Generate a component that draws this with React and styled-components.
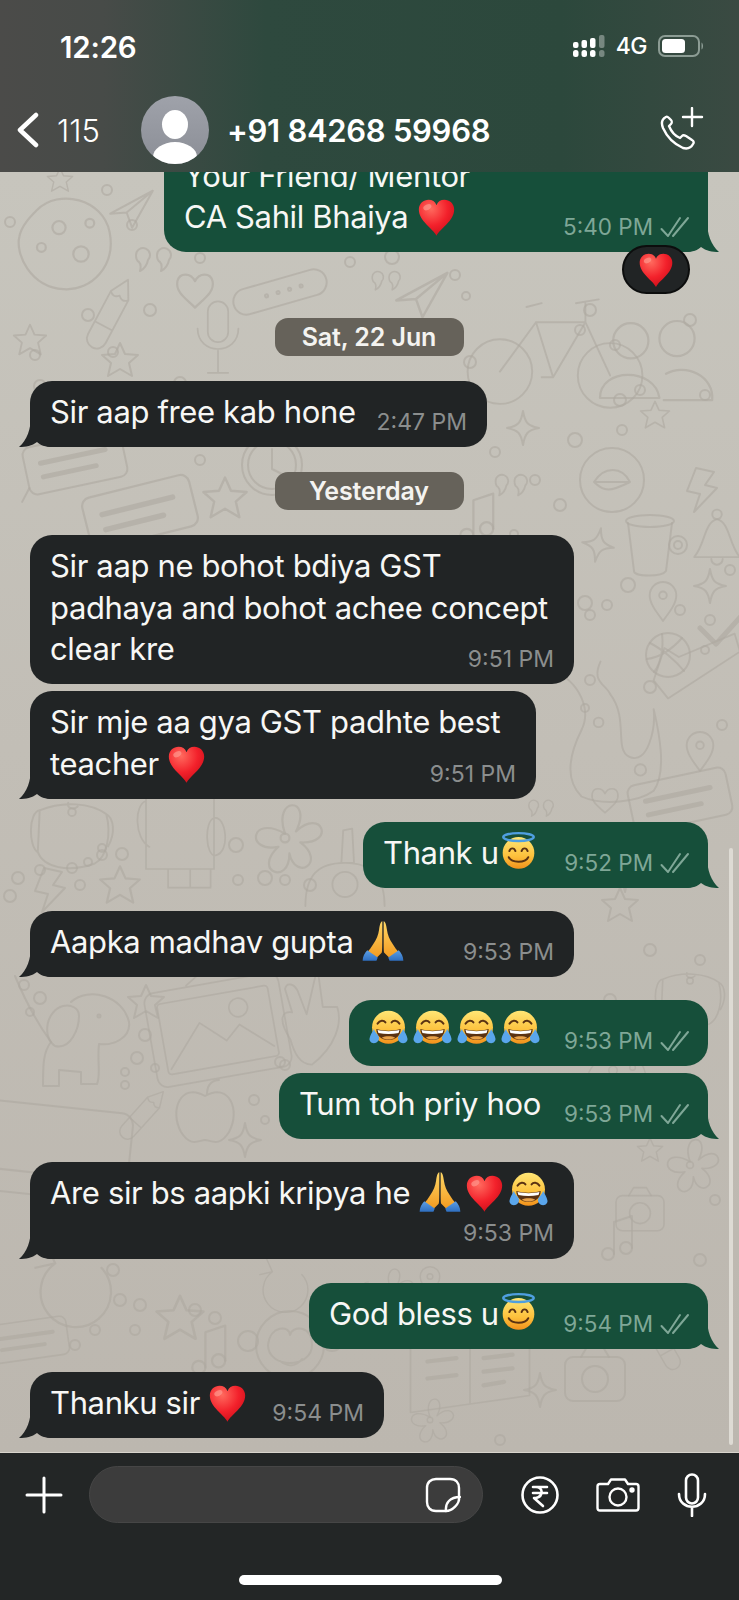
import React from 'react';
import styled, { createGlobalStyle } from 'styled-components';

const Global = createGlobalStyle`
  html, body { margin: 0; padding: 0; background: #232626; }
  body { font-family: Inter, "Liberation Sans", sans-serif; -webkit-font-smoothing: antialiased; }
  * { box-sizing: border-box; }
`;

const Screen = styled.div`
  width: 739px; height: 1600px; display: flex; flex-direction: column; overflow: hidden; color: #fff;
`;
const Header = styled.header`
  height: 172px; flex: none; padding-top: 22px; position: relative; z-index: 2;
  background: linear-gradient(90deg, #4b4b49 0%, #474b48 14%, #2e493e 36%, #2c483c 76%, #3a4a42 100%);
`;
const StatusRow = styled.div`
  height: 48px; display: flex; align-items: center; padding: 0 35px 0 60px;
`;
const Clock = styled.span`
  font-size: 29.5px; font-weight: 600; letter-spacing: -0.2px; margin-right: auto; position: relative; top: 1px;
`;
const Net = styled.span`
  font-size: 23px; font-weight: 500; margin: 0 11px; letter-spacing: -0.5px;
`;
const NavRow = styled.div`
  height: 68px; margin-top: 26px; display: flex; align-items: center; padding: 0 35px 0 17px;
`;
const BackCount = styled.span`
  font-size: 31px; font-weight: 300; margin-left: 18px; width: 84px; letter-spacing: 0;
`;
const Avatar = styled.div`
  width: 68px; height: 68px; border-radius: 50%; flex: none; position: relative; overflow: hidden;
  background: linear-gradient(180deg, #9fa2aa, #8b8e96);
  &::before { content: ''; position: absolute; left: 21px; top: 14px; width: 26px; height: 29px; border-radius: 50%; background: #fff; }
  &::after { content: ''; position: absolute; left: 12px; top: 46px; width: 44px; height: 30px; border-radius: 50%; background: #fff; }
`;
const Name = styled.span`
  font-size: 31px; font-weight: 600; margin-left: 18px; margin-right: auto; letter-spacing: -0.3px;
`;

const Chat = styled.main`
  flex: 1; min-height: 0; position: relative; overflow: hidden;
  background: linear-gradient(180deg, #c7c5bd 0%, #c2beb6 45%, #bcb7af 100%);
`;
const Wallpaper = styled.svg`
  position: absolute; left: 0; top: 0; width: 739px; height: 1280px;
  fill: none; stroke: #aea9a0; stroke-opacity: .6; stroke-width: 2; stroke-linecap: round; stroke-linejoin: round;
`;
const List = styled.div`
  position: relative; display: flex; flex-direction: column; padding: 0 31px 0 30px; margin-top: -27.5px;
`;
const DatePill = styled.div`
  align-self: center; width: 189px; height: 38px; margin-top: ${p => p.$top}px; border-radius: 13px;
  background: #66625a; color: #f4f3f0; font-size: 25px; font-weight: 600; text-align: center; line-height: 39px; letter-spacing: -0.1px;
`;
const Body = styled.div`
  white-space: pre-line; grid-area: 1 / 1;
`;
const Meta = styled.div`
  grid-area: 1 / 1;
  display: flex; align-items: center; gap: 7px; justify-self: end; align-self: end;
  font-size: ${p => (p.$mine ? 22.5 : 23)}px; line-height: 28px; letter-spacing: 0; font-weight: 400;
  color: ${p => (p.$mine ? '#7fa797' : '#8b8e8e')};
  margin: 0 ${p => (p.$mine ? -2 : 0)}px ${p => p.$drop ?? -3.5}px 0;
`;
const Bubble = styled.div`
  position: relative; isolation: isolate; display: grid; width: ${p => p.$w}px; margin-top: ${p => p.$top || 0}px;
  align-self: ${p => (p.$mine ? 'flex-end' : 'flex-start')};
  background: ${p => (p.$mine ? '#164f3a' : '#212425')};
  border-radius: 22px; padding: 10px 20px ${p => p.$bottom || 14.5}px;
  font-size: 31px; line-height: 41.5px; color: #f7f7f5; letter-spacing: -0.36px;
`;
const TailSvg = styled.svg`
  position: absolute; z-index: -1; bottom: 0; width: 34px; height: 32px; overflow: visible;
  ${p => (p.$mine ? 'right: -11px; transform: scaleX(-1);' : 'left: -11px;')}
  fill: ${p => (p.$mine ? '#164f3a' : '#212425')};
`;
const Reaction = styled.div`
  position: absolute; right: 18px; bottom: -42px; width: 68px; height: 49px; border-radius: 25px;
  background: #212425; border: 2px solid #0c0d0d; display: flex; align-items: center; justify-content: center;
`;
const Scrollbar = styled.div`
  position: absolute; left: 729px; top: 676px; width: 4px; height: 597px; border-radius: 2px; background: #dedbd4;
`;

const Footer = styled.footer`
  height: 148px; flex: none; background: #232626; padding-top: 13px; display: flex; flex-direction: column;
  border-top: 1px solid #d8d4cc;
`;
const InputRow = styled.div`
  display: flex; align-items: center; height: 57px; padding-left: 25px;
`;
const InputBox = styled.div`
  width: 394px; height: 57px; margin: 0 38px 0 26px; border-radius: 29px; background: #3c3c3c;
  display: flex; align-items: center; justify-content: flex-end; padding-right: 21px;
  border: 1px solid #464646;
`;
const Actions = styled.div`
  display: flex; align-items: center; gap: 37px;
`;
const HomeBar = styled.div`
  width: 263px; height: 10px; border-radius: 5px; background: #fff; margin: 52px auto 0 239px;
`;
const Ico = styled.svg`
  flex: none; display: block; fill: none; stroke: #fff; stroke-width: ${p => p.$sw || 2.6}; stroke-linecap: round; stroke-linejoin: round;
  ${p => (p.$lift ? `margin-top: -${p.$lift}px;` : '')}
`;
/* the negative block margins keep an emoji from making its line taller */
const EmojiSvg = styled.svg`
  display: inline-block; width: ${p => p.$s || 39}px; height: ${p => p.$s || 39}px;
  margin: -12px ${p => p.$mr || 0}px -12px 0;
  vertical-align: ${p => (p.$v ?? -8) + 12}px;
`;

const Defs = () => (
  <svg width="0" height="0" style={{ position: 'absolute' }}>
    <defs>
      <radialGradient id="hrt" cx="35%" cy="25%" r="85%">
        <stop offset="0" stopColor="#ff6a5e" /><stop offset=".55" stopColor="#f3212b" /><stop offset="1" stopColor="#c70d18" />
      </radialGradient>
      <linearGradient id="face" x1="0" y1="0" x2="0" y2="1">
        <stop offset="0" stopColor="#ffe675" /><stop offset=".6" stopColor="#fdc13c" /><stop offset="1" stopColor="#f2911c" />
      </linearGradient>
      <linearGradient id="hand" x1="0" y1="0" x2="0" y2="1">
        <stop offset="0" stopColor="#ffd765" /><stop offset="1" stopColor="#f29a20" />
      </linearGradient>
      <linearGradient id="cuff" x1="0" y1="0" x2="0" y2="1">
        <stop offset="0" stopColor="#5c9fe6" /><stop offset="1" stopColor="#2f6fc0" />
      </linearGradient>
    </defs>
  </svg>
);

const Heart = ({ s, mr }) => (
  <EmojiSvg $s={s} $mr={mr} viewBox="0 0 64 64" $v={-9}>
    <path fill="url(#hrt)" d="M32 62C26 50 3 38 3 19 3 9 11 3 19 3c6 0 11 3 13 9 2-6 7-9 13-9 8 0 16 6 16 16 0 19-23 31-29 43Z" />
    <ellipse cx="17" cy="15" rx="7" ry="4.5" fill="#ff9d92" opacity=".65" transform="rotate(-25 17 15)" />
  </EmojiSvg>
);
const Halo = () => (
  <EmojiSvg viewBox="0 0 64 64" $v={-6}>
    <circle cx="32" cy="36" r="26" fill="url(#face)" />
    <ellipse cx="32" cy="10" rx="25" ry="6.5" fill="none" stroke="#4f9fe0" strokeWidth="4" />
    <g fill="none" stroke="#5a3212" strokeWidth="3.2" strokeLinecap="round">
      <path d="M17 33c2-6 8-6 10 0M37 33c2-6 8-6 10 0" />
      <path d="M16 43c5 10 27 10 32 0" />
    </g>
  </EmojiSvg>
);
const Joy = ({ mr }) => (
  <EmojiSvg viewBox="0 0 64 64" $mr={mr} $v={-6}>
    <circle cx="32" cy="30" r="27" fill="url(#face)" />
    <g fill="none" stroke="#5a3212" strokeWidth="3.2" strokeLinecap="round">
      <path d="M14 24c4-6 10-6 13-2M37 22c3-4 9-4 13 2" />
    </g>
    <path d="M12 33c13 3.500 27 3.500 40 0 0 11-8 18-20 18S12 44 12 33Z" fill="#5a3212" />
    <path d="M14 34.500c11 2.500 25 2.500 36 0l-1.500 5c-11 2-22 2-33 0Z" fill="#fff" />
    <path d="M21 47c6-3 16-3 22 0-6 4-16 4-22 0Z" fill="#e9a24a" />
    <path d="M8 33c1 4 6 9 8 12 2 6-3 11-8 11s-8-4-7-8c1-5 4-9 7-15ZM56 33c-1 4-6 9-8 12-2 6 3 11 8 11s8-4 7-8c-1-5-4-9-7-15Z" fill="#5aa6ec" />
  </EmojiSvg>
);
const Pray = ({ mr }) => (
  <EmojiSvg viewBox="0 0 64 64" $s={42} $mr={mr} $v={-9}>
    <path fill="url(#hand)" d="M31 2c-3 1-4 6-5 13-1 8-4 15-9 22-3 5-6 9-9 12l14 9 8-8c1-2 1-6 1-48Z" />
    <path fill="url(#hand)" d="M33 2c3 1 4 6 5 13 1 8 4 15 9 22 3 5 6 9 9 12l-14 9-8-8c-1-2-1-6-1-48Z" />
    <path fill="url(#cuff)" d="M8 46 24 57l-2 5H1c0-6 3-12 7-16ZM56 46 40 57l2 5h21c0-6-3-12-7-16Z" />
  </EmojiSvg>
);
const Ticks = () => (
  <svg width="30" height="22" viewBox="0 0 30 22" fill="none" stroke="currentColor" strokeWidth="2" strokeLinecap="round" strokeLinejoin="round">
    <path d="M1.500 13 8 20 20 2M13 20 28 2" />
  </svg>
);
const Tail = ({ mine }) => (
  <TailSvg $mine={mine} viewBox="0 0 34 32">
    <path d="M12 0C12 14 8 25 0 32c7 0 13-1 18-5 3 3 8 5 16 5V0Z" />
  </TailSvg>
);

const Msg = ({ mine, w, top, tail, time, bottom, drop, children }) => (
  <Bubble $mine={mine} $w={w} $top={top} $bottom={bottom}>
    {tail && <Tail mine={mine} />}
    <Body>{children}</Body>
    <Meta $mine={mine} $drop={drop}>{time}{mine && <Ticks />}</Meta>
  </Bubble>
);

/* wallpaper doodles */
const D = ({ x, y, r = 0, s = 1, children }) => <g transform={`translate(${x} ${y}) rotate(${r}) scale(${s})`}>{children}</g>;
const Star = p => <D {...p}><path d="M0-17 5-6l13 1-9 8 3 13L0 9l-12 7 3-13-9-8 13-1Z" /></D>;
const Spark = p => <D {...p}><path d="M0-17C2-5 5-2 16 0 5 2 2 5 0 17-2 5-5 2-16 0-5-2-2-5 0-17Z" /></D>;
const Bolt = p => <D {...p}><path d="M-4-22 14-18 5-5 17-2-6 22 0 4-13 1Z" /></D>;
const Pin = p => <D {...p}><path d="M0 22C-9 10-14 3-14-5a14 14 0 0 1 28 0C14 3 9 10 0 22Z" /><circle cy="-5" r="4" /></D>;
const Quote = p => <D {...p}><path d="M-16-10a7 7 0 1 1 12 5c-1 5-4 9-8 11 1-4 1-7-1-9-2-1-3-4-3-7ZM5-10a7 7 0 1 1 12 5c-1 5-4 9-8 11 1-4 1-7-1-9-2-1-3-4-3-7Z" /></D>;
const Pencil = p => <D {...p}><path d="M-11 36V-18L0-38l11 20v54a11 11 0 0 1-22 0ZM-11-18c4 4 7 4 11 0 4 4 7 4 11 0M-11 20H11" /></D>;
const Mic = p => <D {...p}><rect x="-12" y="-36" width="24" height="48" rx="12" /><path d="M-24-4c0 32 48 32 48 0M0 22V48M-12 48H12" /></D>;
const Card = p => <D {...p}><rect x="-50" y="-24" width="100" height="48" rx="8" /><path d="M-34-6H32M-34 8H20" strokeWidth="5" /><path d="M-50 16-60 28" /></D>;
const Band = p => <D {...p}><rect x="-48" y="-13" width="96" height="26" rx="13" /><circle cx="-14" r="1.500" /><circle cx="-2" r="1.500" /><circle cx="10" r="1.500" /><circle cx="22" r="1.500" /></D>;
const Plane = p => <D {...p}><path d="M-18 12 20-18 6 22-2 8ZM-2 8 20-18" /></D>;
const Bike = p => <D {...p}><circle cx="-58" cy="28" r="34" /><circle cx="58" cy="32" r="34" /><path d="M-58 28-20-24H32L58 32M-20-24-2 34 32-24M-30-40-14-44M22-44 46-48M32-44V-24M-14 34H-2" /></D>;
const People = p => <D {...p}><circle cx="-22" cy="-22" r="16" /><circle cx="20" cy="-24" r="16" /><path d="M-50 30c0-28 50-28 54 0ZM10 8c18-10 44 2 42 24H8" /></D>;
const Duck = p => <D {...p}><circle r="32" /><path d="M-18 2C-8-14 10-14 18 2-2 12-8 12-18 2ZM-18 2 18 2" /></D>;
const Cup = p => <D {...p}><path d="M-24-22-18 26c0 6 28 6 32 0l6-48" /><ellipse cx="-2" cy="-24" rx="24" ry="6" /><circle cx="26" cy="0" r="9" /><circle cx="26" cy="0" r="4" /></D>;
const Bell = p => <D {...p}><path d="M-24 18C-12 4-14-18 0-22 14-18 12 4 24 18Z" /><circle cy="-27" r="5" /><path d="M-6 20a6 6 0 0 0 12 0" /></D>;
const Ball = p => <D {...p}><circle r="22" /><path d="M-18-12C-6-6 8 6 16 16M-6-21C-4-6-8 10-14 17M14-17C6-8-6 2-21 4" /></D>;
const Octo = p => <D {...p}><path d="M-62-64C-30-50-20-20-30 0c-10 20-20 50 0 70 22 10 60 6 76-6 14-20 6-60 0-86 2 20-6 60-26 50-16-8 0-40-20-66C-4-48-20-50-10-72" /><circle cx="-12" cy="-8" r="5" /><circle cx="32" cy="42" r="6" /></D>;
const Shoe = p => <D {...p}><path d="M-46 6-34-30l16 10L44-46 50-26-30 26Z" /></D>;
const Check = p => <D {...p}><path d="M-20-2-4 14 32-26" strokeWidth="5" /></D>;
const Mug = p => <D {...p}><path d="M-34-26C-10-36 20-34 36-22 42 0 36 24 24 30-4 40-30 34-36 18ZM-34-26c-12 2-12 38-2 44M-4-34c-2 6 6 8 10 4M36-22c8 4 10 20 2 34" /><circle cx="0" cy="-24" r="4" /></D>;
const Figure = p => <D {...p}><path d="M-40-50a40 40 0 0 1 80 0V40H-40ZM-40-40c-14 4-14 44 4 54M40-20c14-4 20 40 2 44-12 2-14-40-2-44ZM-14 40V62H12V40M12 44V62H36V40" /></D>;
const Flower = p => <D {...p}><path d="M0-4C-12-38 26-38 10-6 34-28 46 6 14 4 38 22 10 40 4 14 4 44-30 30-6 8-36 14-32-22 0-4Z" /><circle r="4" /></D>;
const Cake = p => <D {...p}><path d="M-2-44 8-46 10-8H-4ZM-44 40C-44 6-30-8 0-8 32-8 44 10 44 40" /><circle cy="16" r="14" /></D>;
const Dog = p => <D {...p}><path d="M-14-28C4-44 38-34 44-8 46 8 28 16 14 14 12 30 16 46 12 54H-4L-4 42-26 40-26 56H-42C-42 36-42 22-34 12M-34 12C-50-10-60-30-70-54" /><path d="M-22-24C-38-20-44 6-30 16-14 20-6 -2-6-14-6-22-14-26-22-24Z" /><circle cx="14" cy="-14" r="1.500" /></D>;
const Frame = p => <D {...p}><rect x="-80" y="-56" width="160" height="112" rx="12" /><rect x="-66" y="-42" width="132" height="84" rx="4" /><path d="M-62 36-20-12 8 14 26-2 62 30" /><circle cx="28" cy="-22" r="11" /><path d="M-28-58-2-74 70-60" /></D>;
const Hand = p => <D {...p}><path d="M-24 16C-38-6-34-16-22-14L-30-40C-28-48-20-46-16-38L-6-12 6-64 12-20 28-20C34-2 26 24 0 44-14 44-20 30-24 16Z" /></D>;
const Apple = p => <D {...p}><path d="M0-14C-24-28-36 0-24 22-14 38-6 30 0 30 6 30 14 38 24 22 36 0 24-28 0-14ZM2-16C2-26 8-30 14-30" /></D>;
const Tablet = p => <D {...p}><rect x="-80" y="-44" width="160" height="90" rx="12" /><path d="M-60 24H60" /></D>;
const Ring = p => <D {...p}><path d="M-18-26A32 32 0 1 0 24-22M-26-44-18-26-36-22" /></D>;
const Monkey = p => <D {...p}><circle r="34" /><path d="M-22 0C-20-20 0-20 0-10 2-20 22-20 22 0 22 24-22 24-22 0ZM-10 16C-2 22 6 22 12 14" /><circle cx="-42" cy="-4" r="10" /><circle cx="42" cy="-4" r="10" /></D>;
const Note = p => <D {...p}><path d="M-6 14V-18L12-24V8" /><circle cx="-12" cy="14" r="6" /><circle cx="6" cy="8" r="6" /></D>;
const Book = p => <D {...p}><path d="M-70-40 0-50 70-60V30L0 40-70 50ZM0-50V40" /><path d="M-50-10-16-14M-50 10-16 6M16-30 50-34M16-14 50-18M16 2 50-2M16 18 40 14" strokeWidth="5" /></D>;
const Camera = p => <D {...p}><rect x="-30" y="-18" width="60" height="44" rx="8" /><circle cy="4" r="13" /><path d="M-14-18-8-28H8L14-18" /></D>;
const Clk = p => <D {...p}><circle r="30" /><circle r="24" /><path d="M0-16V4L12 10" /></D>;
const Blob = p => <D {...p}><path d="M-30-30C-10-50 30-40 36-10 42 20 20 44-6 42-36 40-50 10-46-6-44-16-36-24-30-30Z" /><circle cx="-10" cy="-14" r="6" /><circle cx="-26" cy="4" r="4" /><circle cx="10" cy="10" r="7" /><circle cx="18" cy="-18" r="4" /></D>;
const HeartD = p => <D {...p}><path d="M0 16C-8 8-18 2-16-8-14-16-4-16 0-8 4-16 14-16 16-8 18 2 8 8 0 16Z" /></D>;

const dots = [
  [10,222,5],[107,190,5],[132,225,5],[232,193,5],[35,355,5],[113,352,5],[40,386,6],[180,383,6],[150,310,6],[88,315,6],
  [200,258,5],[350,262,5],[392,257,7],[455,275,5],[466,296,4],[590,310,6],[580,330,5],[615,345,5],[520,245,4],[470,362,6],
  [690,320,6],[705,395,5],[640,390,5],[620,400,6],[622,430,5],[575,440,7],[535,480,5],[560,505,6],[514,534,4],[495,452,5],
  [200,460,5],[260,438,6],[540,540,4],[545,575,6],[628,585,7],[585,603,7],[607,605,5],[590,615,5],[680,610,5],[730,570,5],
  [710,620,5],[705,650,4],[650,687,6],[722,725,5],[590,680,5],[585,708,4],[40,870,5],[72,868,5],[88,862,4],[80,885,5],
  [102,848,4],[122,854,6],[18,878,6],[10,896,6],[102,855,5],[236,845,7],[238,880,5],[265,878,7],[285,880,5],[310,885,6],
  [24,985,5],[40,998,6],[30,1012,4],[145,1035,6],[137,1058,6],[155,1068,4],[125,1072,4],[125,1085,4],[285,1065,5],[254,1100,5],
  [265,1120,4],[280,1062,5],[113,1270,6],[120,1300,6],[140,1305,6],[95,1330,5],[135,1330,5],[195,1310,6],[215,1318,6],[75,1345,5],
  [500,1440,5],[590,1310,5],[640,1300,6],[700,1260,6],[715,1200,5],[660,1120,6],[680,1010,5],[700,960,5],[650,950,6],[610,1000,6],
];

const Doodles = () => (
  <Wallpaper viewBox="0 172 739 1280">
    <Blob x={70} y={243} s={1.1} /><Plane x={130} y={205} r={10} /><Star x={60} y={180} s={.7} />
    <Quote x={152} y={265} /><HeartD x={195} y={290} s={1.1} /><Band x={280} y={292} r={-16} />
    <Pencil x={112} y={310} r={28} s={.9} /><Mic x={218} y={332} s={.85} /><Star x={30} y={340} s={.9} /><Star x={120} y={360} s={1} />
    <Plane x={420} y={290} r={10} s={1.2} /><Quote x={385} y={285} s={.8} /><Bike x={555} y={345} s={.95} /><People x={655} y={365} s={1.1} />
    <Star x={655} y={415} s={.8} /><Spark x={523} y={428} /><Duck x={612} y={480} /><Bolt x={700} y={490} />
    <Card x={75} y={462} r={-12} s={1} /><Card x={140} y={512} r={-14} s={1.1} /><Star x={225} y={498} s={1.2} /><Clk x={272} y={465} />
    <Note x={480} y={520} s={1.1} /><Quote x={510} y={490} s={.9} />
    <Spark x={598} y={545} r={10} /><Cup x={652} y={545} s={1} /><Bell x={717} y={540} s={.95} /><Pin x={663} y={600} s={.95} /><Spark x={710} y={586} />
    <Ball x={668} y={655} s={1} /><Check x={720} y={630} /><Shoe x={695} y={675} s={.9} /><Octo x={610} y={730} s={.95} /><Pin x={700} y={750} s={.95} />
    <Card x={680} y={800} r={-12} s={1} /><Quote x={540} y={812} s={.7} /><HeartD x={605} y={800} s={.8} />
    <Mug x={72} y={835} s={.95} /><Figure x={180} y={835} s={.85} /><Flower x={285} y={838} s={1.1} /><Cake x={345} y={870} s={.9} />
    <Bolt x={48} y={890} /><Star x={120} y={885} s={1.1} /><Star x={146} y={1002} s={1} /><Dog x={85} y={1030} s={1} />
    <Frame x={218} y={1030} r={-10} s={.85} /><Hand x={312} y={1025} s={.9} /><Pencil x={145} y={1112} r={42} s={.72} /><Apple x={205} y={1110} s={1} />
    <Spark x={245} y={1140} /><Tablet x={50} y={1150} r={6} /><Ring x={75} y={1292} s={1.1} /><Star x={180} y={1318} s={1.3} />
    <Monkey x={290} y={1345} s={1} /><Note x={212} y={1352} s={1.1} /><Book x={470} y={1370} s={.85} /><Card x={28} y={1340} r={-8} s={.8} />
    <Spark x={540} y={1390} /><Camera x={595} y={1375} /><Flower x={430} y={1420} s={.7} /><Pencil x={660} y={1340} r={-30} s={.7} />
    <Flower x={390} y={1290} s={.7} /><Pin x={430} y={1280} s={.7} /><Apple x={360} y={1300} s={.6} /><Ring x={285} y={1290} s={.7} />
    <Star x={620} y={905} s={1} /><Spark x={625} y={875} /><Mug x={690} y={1000} s={.8} /><Flower x={690} y={1165} s={.85} /><Camera x={640} y={1210} s={.8} />
    <Blob x={620} y={1080} s={.7} /><Star x={650} y={1150} s={.7} /><Note x={620} y={1240} /><Bell x={690} y={1105} s={.8} />
    {dots.map(([cx, cy, r], i) => <circle key={i} cx={cx} cy={cy} r={r} />)}
  </Wallpaper>
);

export default function App() {
  return (
    <Screen>
      <Global />
      <Defs />
      <Header>
        <StatusRow>
          <Clock>12:26</Clock>
          <svg width="32" height="22" viewBox="0 0 32 22" fill="#fff">
            <rect x="0" y="7" width="5.500" height="6" rx="2" /><rect x="0" y="15" width="5.500" height="7" rx="2.500" />
            <rect x="8.500" y="5" width="5.500" height="8" rx="2" /><rect x="8.500" y="15" width="5.500" height="7" rx="2.500" />
            <rect x="17" y="3" width="5.500" height="10" rx="2" /><rect x="17" y="15" width="5.500" height="7" rx="2.500" />
            <rect x="26" y="0" width="5.500" height="13" rx="2" opacity=".35" /><rect x="26" y="15" width="5.500" height="7" rx="2.500" opacity=".35" />
          </svg>
          <Net>4G</Net>
          <svg width="46" height="22" viewBox="0 0 46 22">
            <rect x="1" y="1" width="40" height="20" rx="6" fill="none" stroke="#8c9c94" strokeWidth="2" />
            <rect x="4" y="4" width="23" height="14" rx="3.500" fill="#fff" />
            <path d="M43.500 7.500c2 1 2 6 0 7Z" fill="#8c9c94" />
          </svg>
        </StatusRow>
        <NavRow>
          <Ico width="22" height="36" viewBox="0 0 22 36" $sw={4.5}><path d="M19 3 3 18l16 15" /></Ico>
          <BackCount>115</BackCount>
          <Avatar />
          <Name>+91 84268 59968</Name>
          <Ico width="44" height="44" viewBox="0 0 44 44" $sw={2.4} $lift={2}>
            <path d="M6 10c-4 2-5 6-3 11 4 9 11 16 20 20 4 1 8 0 10-4 1-1 1-3-1-4l-6-4c-2-1-3-1-4 0l-2 2c-5-2-9-7-11-12l2-2c1-1 1-3 0-4L9 11c-1-1-2-2-3-1Z" />
            <path d="M32 1v18M23 10h19" />
          </Ico>
        </NavRow>
      </Header>

      <Chat>
        <Doodles />
        <List>
          <Msg mine w={544} tail time="5:40 PM">
            {'Your Friend/ Mentor\nCA Sahil Bhaiya '}<Heart />
            <Reaction><Heart s={36} /></Reaction>
          </Msg>
          <DatePill $top={66}>Sat, 22 Jun</DatePill>
          <Msg w={457} top={25} tail time="2:47 PM">Sir aap free kab hone</Msg>
          <DatePill $top={25}>Yesterday</DatePill>
          <Msg w={544} top={25} time="9:51 PM">{'Sir aap ne bohot bdiya GST\npadhaya and bohot achee concept\nclear kre'}</Msg>
          <Msg w={506} top={7} tail time="9:51 PM">{'Sir mje aa gya GST padhte best\nteacher '}<Heart /></Msg>
          <Msg mine w={345} top={23} tail time="9:52 PM">Thank u<Halo /></Msg>
          <Msg w={544} top={23} tail time="9:53 PM">Aapka madhav gupta <Pray /></Msg>
          <Msg mine w={359} top={23} time="9:53 PM"><Joy mr={5} /><Joy mr={5} /><Joy mr={5} /><Joy /></Msg>
          <Msg mine w={429} top={7} tail time="9:53 PM">Tum toh priy hoo</Msg>
          <Msg w={544} top={23} tail bottom={45.5} drop={-34} time="9:53 PM">Are sir bs aapki kripya he <Pray mr={4} /><Heart mr={5} /><Joy /></Msg>
          <Msg mine w={399} top={24} tail time="9:54 PM">God bless u<Halo /></Msg>
          <Msg w={354} top={23} tail time="9:54 PM">Thanku sir <Heart /></Msg>
        </List>
        <Scrollbar />
      </Chat>

      <Footer>
        <InputRow>
          <Ico width="38" height="38" viewBox="0 0 38 38" $sw={3}><path d="M19 2v34M2 19h34" /></Ico>
          <InputBox>
            <Ico width="36" height="36" viewBox="0 0 36 36" $sw={2.4}>
              <path d="M21 34H11C5 34 2 30 2 25V11C2 5 6 2 11 2h14c6 0 9 4 9 9v9C35 27 27 34 21 34Z" />
              <path d="M21 34c-1-8 4-14 14-14" />
            </Ico>
          </InputBox>
          <Actions>
            <Ico width="38" height="38" viewBox="0 0 38 38" $sw={2.6}>
              <circle cx="19" cy="19" r="17.500" />
              <path d="M12 11h14M12 17h14M15 11c7 0 8 9 0 11h-2l9 8" />
            </Ico>
            <Ico width="44" height="34" viewBox="0 0 44 34" $sw={2.4}>
              <path d="M4 6h8l3-4.500h14L32 6h8c1.500 0 2.500 1 2.500 2.500V30c0 1.500-1 2.500-2.500 2.500H4c-1.500 0-2.500-1-2.500-2.500V8.500C1.500 7 2.500 6 4 6Z" />
              <circle cx="22" cy="19" r="8.500" />
              <circle cx="36" cy="12" r="1.500" fill="#fff" />
            </Ico>
            <Ico width="30" height="44" viewBox="0 0 30 44" $sw={2.6}>
              <rect x="9" y="1.500" width="12" height="29" rx="6" />
              <path d="M2 21c0 17 26 17 26 0M15 34v9" />
            </Ico>
          </Actions>
        </InputRow>
        <HomeBar />
      </Footer>
    </Screen>
  );
}
